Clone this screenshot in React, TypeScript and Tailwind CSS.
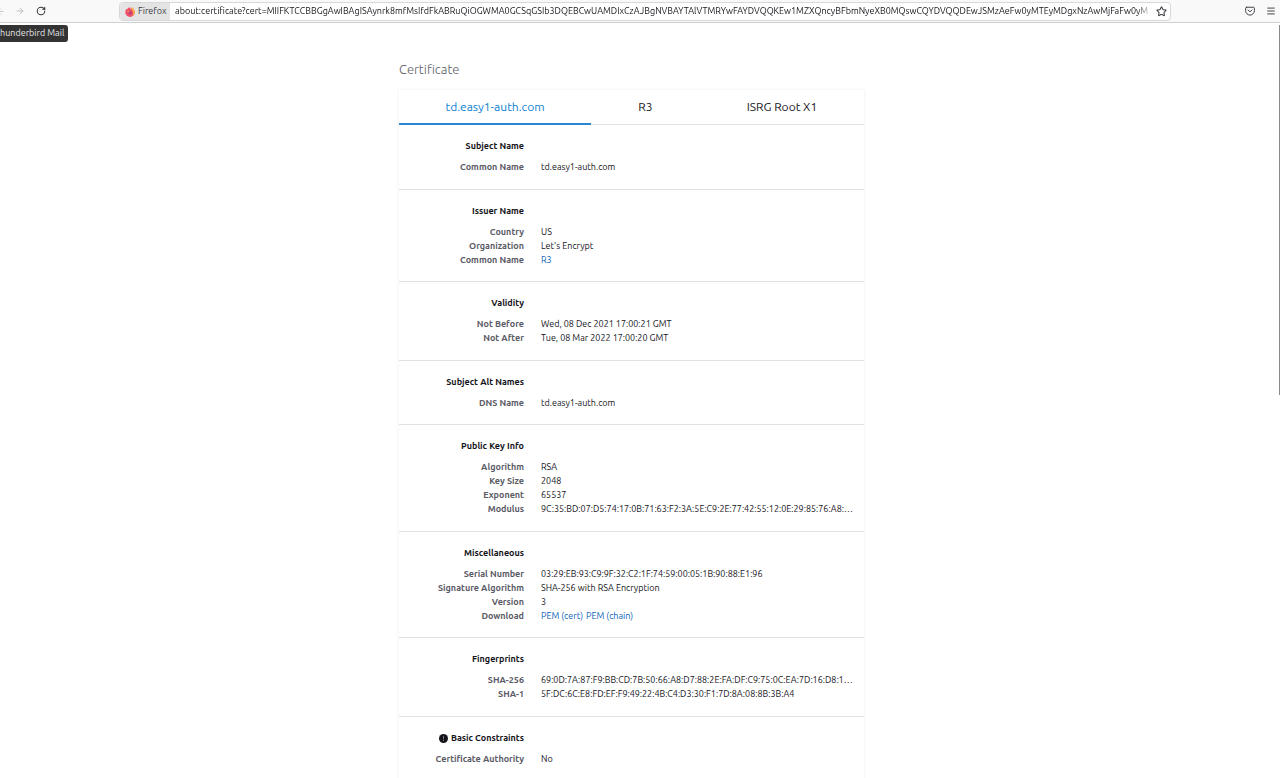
import type { ReactNode } from "react";
import { ArrowLeft, ArrowRight, Menu, RotateCw, Star } from "lucide-react";

type Row = { label: string; value: ReactNode };
type Group = { title: string; critical?: boolean; rows: Row[] };

const link = "text-[#0a5fb8] hover:underline";

const groups: Group[] = [
  { title: "Subject Name", rows: [{ label: "Common Name", value: "td.easy1-auth.com" }] },
  {
    title: "Issuer Name",
    rows: [
      { label: "Country", value: "US" },
      { label: "Organization", value: "Let's Encrypt" },
      { label: "Common Name", value: <a href="#r3" className={link}>R3</a> },
    ],
  },
  {
    title: "Validity",
    rows: [
      { label: "Not Before", value: "Wed, 08 Dec 2021 17:00:21 GMT" },
      { label: "Not After", value: "Tue, 08 Mar 2022 17:00:20 GMT" },
    ],
  },
  { title: "Subject Alt Names", rows: [{ label: "DNS Name", value: "td.easy1-auth.com" }] },
  {
    title: "Public Key Info",
    rows: [
      { label: "Algorithm", value: "RSA" },
      { label: "Key Size", value: "2048" },
      { label: "Exponent", value: "65537" },
      { label: "Modulus", value: "9C:35:BD:07:D5:74:17:0B:71:63:F2:3A:5E:C9:2E:77:42:55:12:0E:29:85:76:A8:…" },
    ],
  },
  {
    title: "Miscellaneous",
    rows: [
      { label: "Serial Number", value: "03:29:EB:93:C9:9F:32:C2:1F:74:59:00:05:1B:90:88:E1:96" },
      { label: "Signature Algorithm", value: "SHA-256 with RSA Encryption" },
      { label: "Version", value: "3" },
      {
        label: "Download",
        value: (
          <span className="flex gap-[3px]">
            <a href="#cert" className={link}>PEM (cert)</a>
            <a href="#chain" className={link}>PEM (chain)</a>
          </span>
        ),
      },
    ],
  },
  {
    title: "Fingerprints",
    rows: [
      { label: "SHA-256", value: "69:0D:7A:87:F9:BB:CD:7B:50:66:A8:D7:88:2E:FA:DF:C9:75:0C:EA:7D:16:D8:1…" },
      { label: "SHA-1", value: "5F:DC:6C:E8:FD:EF:F9:49:22:4B:C4:D3:30:F1:7D:8A:08:8B:3B:A4" },
    ],
  },
  { title: "Basic Constraints", critical: true, rows: [{ label: "Certificate Authority", value: "No" }] },
];

const url =
  "about:certificate?cert=MIIFKTCCBBGgAwIBAgISAynrk8mfMsIfdFkABRuQiOGWMA0GCSqGSIb3DQEBCwUAMDIxCzAJBgNVBAYTAlVTMRYwFAYDVQQKEw1MZXQncyBFbmNyeXB0MQswCQYDVQQDEwJSMzAeFw0yMTEyMDgxNzAwMjFaFw0yM";

function FirefoxLogo() {
  return (
    <svg viewBox="0 0 16 16" className="size-[10px]" aria-hidden="true">
      <path d="M2 3.2c.7.3 1.4.3 2 .1C5 1.5 6.2.7 7.3.5 7.5 2 8.6 2.300 10 3c.4-1 .2-1.800 0-2.500 3.500 1.300 5.700 4.300 5.700 7.900A7.600 7.600 0 0 1 8 15.900 7.700 7.700 0 0 1 .4 8.300C.4 6.200 1 4.500 2 3.200Z" fill="#f0506a" />
      <path d="M10 .5c3.500 1.300 5.700 4.300 5.700 7.900 0 3-1.700 5.500-4.200 6.700 1.700-2.100 2.100-4.600 1.300-7C12.200 6 9.600 4.500 10 .5Z" fill="#f9b04c" />
      <circle cx="8" cy="9" r="3.2" fill="#c23f78" />
      <path d="M3.500 6.200c1.500-.8 3.200-.3 4.300.9-1.500.1-2.200.9-2.300 1.900-.9-.6-1.600-1.500-2-2.800Z" fill="#ff9640" />
    </svg>
  );
}

function PocketIcon() {
  return (
    <svg viewBox="0 0 16 16" className="size-[10px]" fill="none" stroke="currentColor" strokeWidth="1.5" strokeLinecap="round" strokeLinejoin="round" aria-hidden="true">
      <path d="M2.500 2h11c.8 0 1.500.7 1.500 1.500V7.500a7 7 0 0 1-14 0v-4C1 2.700 1.700 2 2.500 2Z" />
      <path d="m4.800 6.300 3.200 3 3.200-3" />
    </svg>
  );
}

function CriticalIcon() {
  return (
    <svg viewBox="0 0 16 16" className="size-[9px]" role="img" aria-label="Critical">
      <circle cx="8" cy="8" r="8" fill="#15141a" />
      <path d="M8 4v4.500M8 11v.8" stroke="#8a8a92" strokeWidth="1.5" strokeLinecap="round" />
    </svg>
  );
}

function Toolbar() {
  return (
    <header className="flex h-[23px] items-center border-b border-[#cfcfd2] bg-[#f9f9fa] text-[9px] text-[#38383d]">
      <nav className="flex w-[119px] shrink-0 items-center">
        <button aria-label="Back" className="w-[5px] overflow-hidden text-[#b5b5ba]">
          <ArrowLeft className="-ml-1 size-[9px]" strokeWidth={2} />
        </button>
        <button aria-label="Forward" className="ml-[10px] text-[#b5b5ba]">
          <ArrowRight className="size-[10px]" strokeWidth={2} />
        </button>
        <button aria-label="Reload" className="ml-[11px]">
          <RotateCw className="size-[10px]" strokeWidth={2.5} />
        </button>
      </nav>
      <div className="flex h-[19px] min-w-0 flex-1 items-center rounded-sm border border-[#d8d8da] bg-white">
        <span className="flex h-full w-[50px] shrink-0 items-center gap-[3px] rounded-l-sm bg-[#e4e4e5] pt-px pl-[5px]">
          <FirefoxLogo />
          Firefox
        </span>
        <input
          aria-label="Address"
          readOnly
          value={url}
          className="ml-[5px] min-w-0 flex-1 bg-transparent pt-[2px] text-[9px] text-[#15141a] outline-none [mask-image:linear-gradient(to_left,transparent,black_16px)]"
        />
        <button aria-label="Bookmark this page" className="mx-[3px]">
          <Star className="size-[11px]" strokeWidth={2.2} />
        </button>
      </div>
      <div className="flex w-[109px] shrink-0 items-center justify-end gap-[11px] pr-1">
        <button aria-label="Save to Pocket"><PocketIcon /></button>
        <button aria-label="Open menu"><Menu className="size-[10px]" strokeWidth={2.2} /></button>
      </div>
    </header>
  );
}

function CertificateGroup({ title, critical, rows }: Group) {
  return (
    <section className="border-b border-[#e2e2e6] pt-[14px] pb-[15px] even:pb-[14px]">
      <h2 className="flex w-[125px] items-center justify-end gap-[3px] pb-[7px] leading-[14px] font-bold whitespace-nowrap text-[#15141a]">
        {critical && <CriticalIcon />}
        {title}
      </h2>
      <dl className="leading-[14px]">
        {rows.map((row) => (
          <div key={row.label} className="flex gap-[17px]">
            <dt className="w-[125px] shrink-0 text-right font-bold whitespace-nowrap text-[#5b5b66]">{row.label}</dt>
            <dd className="whitespace-nowrap text-[#15141a]">{row.value}</dd>
          </div>
        ))}
      </dl>
    </section>
  );
}

export default function App() {
  return (
    <div className="h-screen overflow-hidden bg-white font-['Ubuntu','Noto_Sans',sans-serif]">
      <Toolbar />
      <div className="relative">
        <div className="absolute top-[2px] left-0 flex h-[17px] items-center rounded-r-[3px] bg-[#333333] pr-1 text-[9px] whitespace-nowrap text-[#e6e6e6]">
          hunderbird Mail
        </div>
        <div className="absolute top-[2px] right-0 h-[370px] w-px bg-[#8a8a8a]" />
        <main className="pt-9 pr-[17px]">
          <div className="mx-auto max-w-[465px]">
            <h1 className="text-[13px] leading-5 font-light text-[#5b5b66]">Certificate</h1>
            <div className="mt-[11px] text-[9px] shadow-[0_0_3px_rgba(0,0,0,0.08)]">
              <div role="tablist" className="flex h-[35px] border-b border-[#e2e2e6] text-[12px] text-[#15141a]">
                <button role="tab" aria-selected="true" className="-mb-px w-[192px] border-b-2 border-[#2a86d1] text-[#0a7fd1]">
                  td.easy1-auth.com
                </button>
                <button role="tab" aria-selected="false" className="w-[109px]">R3</button>
                <button role="tab" aria-selected="false" className="flex-1">ISRG Root X1</button>
              </div>
              <div>
                {groups.map((group) => (
                  <CertificateGroup key={group.title} {...group} />
                ))}
              </div>
            </div>
          </div>
        </main>
      </div>
    </div>
  );
}
